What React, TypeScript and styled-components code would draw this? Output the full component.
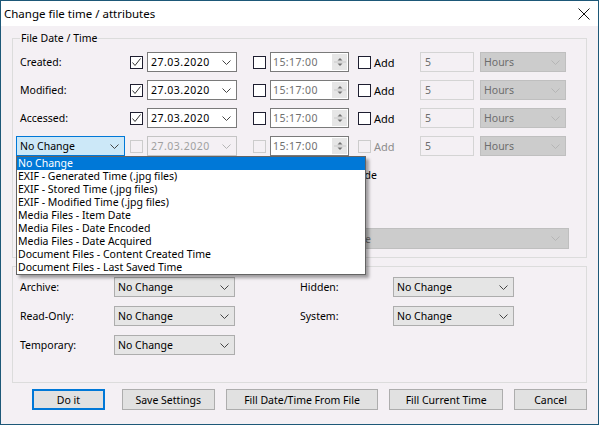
import styled, { createGlobalStyle } from "styled-components";

const GlobalStyle = createGlobalStyle`
  html, body {
    margin: 0;
    padding: 0;
  }
  body {
    font-family: "Noto Sans", "Liberation Sans", sans-serif;
    font-size: 10.5px;
    color: #000;
  }
`;

const sources = [
  "No Change",
  "EXIF - Generated Time (.jpg files)",
  "EXIF - Stored Time (.jpg files)",
  "EXIF - Modified Time (.jpg files)",
  "Media Files - Item Date",
  "Media Files - Date Encoded",
  "Media Files - Date Acquired",
  "Document Files - Content Created Time",
  "Document Files - Last Saved Time",
];

const Chevron = ({ color = "#444" }: { color?: string }) => (
  <svg width="9" height="5" viewBox="0 0 9 5">
    <path d="M0.5 0.5 L4.5 4.5 L8.5 0.5" fill="none" stroke={color} strokeWidth="1" />
  </svg>
);

const Check = () => (
  <svg width="11" height="11" viewBox="0 0 11 11">
    <path d="M1.5 5.5 L4 8.5 L9.5 1.5" fill="none" stroke="#333" strokeWidth="1" />
  </svg>
);

const CheckBox = ({ checked, disabled }: { checked?: boolean; disabled?: boolean }) => (
  <Box $disabled={disabled}>{checked && <Check />}</Box>
);

const Combo = ({
  value,
  width,
  variant,
  spaced,
}: {
  value: string;
  width: number;
  variant: "white" | "gray" | "disabled" | "faded" | "focus";
  spaced?: boolean;
}) => (
  <ComboBox $width={width} $variant={variant}>
    <ComboText $spaced={spaced}>{value}</ComboText>
    <Chevron color={variant === "disabled" || variant === "faded" ? "#b5b5b5" : "#444"} />
  </ComboBox>
);

const TimeField = () => (
  <TimeBox>
    <TimeText>15:17:00</TimeText>
    <Spinner>
      <svg width="14" height="14" viewBox="0 0 14 14">
        <path d="M4.5 5.5 L7 3 L9.5 5.5 Z" fill="#707070" />
        <line x1="1" y1="7" x2="13" y2="7" stroke="#c8c8c8" />
        <path d="M4.5 8.5 L7 11 L9.5 8.5 Z" fill="#707070" />
      </svg>
    </Spinner>
  </TimeBox>
);

const DateRow = ({ label, disabled }: { label: string; disabled?: boolean }) => (
  <>
    <RowLabel>{label}</RowLabel>
    <CheckBox checked disabled={disabled} />
    <Combo value="27.03.2020" width={90} variant={disabled ? "faded" : "white"} spaced />
    <CheckBox disabled={disabled} />
    <TimeField />
    <AddCell $disabled={disabled}>
      <CheckBox disabled={disabled} />
      <span>Add</span>
    </AddCell>
    <NumBox>5</NumBox>
    <Combo value="Hours" width={86} variant="disabled" />
  </>
);

export default function App() {
  return (
    <>
      <GlobalStyle />
      <Window>
        <TitleBar>
          <span>Change file time / attributes</span>
          <svg width="12" height="12" viewBox="0 0 12 12">
            <path d="M0.5 0.5 L11.5 11.5 M11.5 0.5 L0.5 11.5" stroke="#111" strokeWidth="1" />
          </svg>
        </TitleBar>
        <Content>
          <Group>
            <Legend>File Date / Time</Legend>
            <DateGrid>
              <DateRow label="Created:" />
              <DateRow label="Modified:" />
              <DateRow label="Accessed:" />
              <SourceWrap>
                <Combo value="No Change" width={109} variant="focus" />
                <DropList>
                  {sources.map((s, i) => (
                    <DropItem key={s} $active={i === 0}>
                      {s}
                    </DropItem>
                  ))}
                </DropList>
              </SourceWrap>
              <CheckBox disabled />
              <Combo value="27.03.2020" width={90} variant="faded" spaced />
              <CheckBox disabled />
              <TimeField />
              <AddCell $disabled>
                <CheckBox disabled />
                <span>Add</span>
              </AddCell>
              <NumBox>5</NumBox>
              <Combo value="Hours" width={86} variant="disabled" />
            </DateGrid>
            <OptionRow>
              <CheckBox />
              <OptionText>Use Daylight Saving Mode</OptionText>
            </OptionRow>
            <WideSelect>
              <WideText>Local Time Zone</WideText>
              <Chevron color="#b5b5b5" />
            </WideSelect>
          </Group>
          <AttrGroup>
            <AttrLabel>Archive:</AttrLabel>
            <Combo value="No Change" width={121} variant="gray" />
            <AttrLabel $right>Hidden:</AttrLabel>
            <Combo value="No Change" width={121} variant="gray" />
            <AttrLabel>Read-Only:</AttrLabel>
            <Combo value="No Change" width={121} variant="gray" />
            <AttrLabel $right>System:</AttrLabel>
            <Combo value="No Change" width={121} variant="gray" />
            <AttrLabel>Temporary:</AttrLabel>
            <Combo value="No Change" width={121} variant="gray" />
          </AttrGroup>
          <Buttons>
            <Button $width={73} $primary>
              Do it
            </Button>
            <Button $width={93}>Save Settings</Button>
            <Button $width={153}>Fill Date/Time From File</Button>
            <Button $width={114}>Fill Current Time</Button>
            <Button $width={73}>Cancel</Button>
          </Buttons>
        </Content>
      </Window>
    </>
  );
}

const Window = styled.div`
  width: 599px;
  height: 425px;
  box-sizing: border-box;
  border: 1px solid #1d5878;
  background: #f4f0f4;
  display: flex;
  flex-direction: column;
`;

const TitleBar = styled.div`
  height: 25px;
  background: #fff;
  display: flex;
  align-items: center;
  justify-content: space-between;
  padding: 0 8px 0 3px;
  font-size: 11.5px;
`;

const Content = styled.div`
  display: flex;
  flex-direction: column;
  padding: 4px 11px 0 11px;
`;

const Group = styled.fieldset`
  margin: 0;
  padding: 6px 7px 8px 7px;
  border: 1px solid #dcdcdc;
  min-width: 0;
`;

const Legend = styled.legend`
  padding: 0 1px;
  margin-left: 0;
  line-height: 16px;
`;

const DateGrid = styled.div`
  display: grid;
  grid-template-columns: 110px 17px 106px 17px 88px 62px 60px 86px;
  grid-auto-rows: 20px;
  row-gap: 8px;
  align-items: center;
`;

const RowLabel = styled.span`
  line-height: 20px;
`;

const Box = styled.span<{ $disabled?: boolean }>`
  box-sizing: border-box;
  width: 13px;
  height: 13px;
  border: 1px solid ${(p) => (p.$disabled ? "#cccccc" : "#1e1e30")};
  background: ${(p) => (p.$disabled ? "#f4f0f4" : "#fff")};
  display: inline-flex;
  align-items: center;
  justify-content: center;
`;

const variants = {
  white: { bg: "#fff", border: "#7a7a7a", color: "#000" },
  gray: { bg: "#e5e5e5", border: "#adadad", color: "#000" },
  disabled: { bg: "#cccccc", border: "#bfbfbf", color: "#6d6d6d" },
  faded: { bg: "#f4f0f4", border: "#c4c4c4", color: "#a0a0a0" },
  focus: { bg: "#cce8f8", border: "#0078d7", color: "#000" },
};

const ComboBox = styled.div<{ $width: number; $variant: keyof typeof variants }>`
  box-sizing: border-box;
  width: ${(p) => p.$width}px;
  height: 20px;
  border: 1px solid ${(p) => variants[p.$variant].border};
  background: ${(p) => variants[p.$variant].bg};
  color: ${(p) => variants[p.$variant].color};
  display: flex;
  align-items: center;
  justify-content: space-between;
  padding: 0 5px 0 3px;
  white-space: nowrap;
`;

const ComboText = styled.span<{ $spaced?: boolean }>`
  letter-spacing: ${(p) => (p.$spaced ? "0.5px" : "0")};
`;

const TimeBox = styled.div`
  box-sizing: border-box;
  width: 79px;
  height: 20px;
  border: 1px solid #7a7a7a;
  background: #fff;
  color: #707070;
  display: flex;
  align-items: center;
  justify-content: space-between;
  padding: 0 1px 0 2px;
`;

const TimeText = styled.span`
  letter-spacing: 0.4px;
`;

const Spinner = styled.span`
  width: 15px;
  height: 16px;
  background: #e6e6e6;
  display: flex;
  align-items: center;
  justify-content: center;
`;

const AddCell = styled.div<{ $disabled?: boolean }>`
  display: flex;
  align-items: center;
  gap: 3px;
  font-size: 11px;
  color: ${(p) => (p.$disabled ? "#8c8c8c" : "#000")};
`;

const NumBox = styled.div`
  box-sizing: border-box;
  width: 54px;
  height: 20px;
  border: 1px solid #d4d4d4;
  color: #6d6d6d;
  display: flex;
  align-items: center;
  padding-left: 4px;
`;

const SourceWrap = styled.div`
  position: relative;
  margin-left: -4px;
`;

const DropList = styled.div`
  position: absolute;
  top: 20px;
  left: 0;
  z-index: 5;
  width: 350px;
  box-sizing: border-box;
  border: 1px solid #646464;
  background: #fff;
  box-shadow: 3px 3px 3px rgba(0, 0, 0, 0.35);
`;

const DropItem = styled.div<{ $active?: boolean }>`
  height: 13px;
  line-height: 13px;
  padding-left: 1px;
  white-space: nowrap;
  background: ${(p) => (p.$active ? "#0078d7" : "transparent")};
  color: ${(p) => (p.$active ? "#fff" : "#000")};
`;

const OptionRow = styled.div`
  display: flex;
  align-items: center;
  gap: 4px;
  height: 16px;
  margin-top: 11px;
  padding-left: 110px;
`;

const OptionText = styled.span`
  width: 230px;
  text-align: right;
`;

const WideSelect = styled.div`
  box-sizing: border-box;
  height: 21px;
  margin: 45px 0 0 127px;
  width: 422px;
  border: 1px solid #bfbfbf;
  background: #cccccc;
  color: #6d6d6d;
  display: flex;
  align-items: center;
  justify-content: space-between;
  padding: 0 8px 0 3px;
`;

const WideText = styled.span`
  width: 220px;
  text-align: right;
`;

const AttrGroup = styled.div`
  margin-top: 8px;
  border: 1px solid #dcdcdc;
  padding: 10px 7px 27px 7px;
  display: grid;
  grid-template-columns: 94px 121px 65px 93px 121px;
  grid-auto-rows: 20px;
  row-gap: 9px;
  align-items: center;
`;

const AttrLabel = styled.span<{ $right?: boolean }>`
  grid-column: ${(p) => (p.$right ? 4 : 1)};
`;

const Buttons = styled.div`
  display: flex;
  gap: 11px;
  margin-top: 6px;
  padding-left: 20px;
`;

const Button = styled.button<{ $width: number; $primary?: boolean }>`
  box-sizing: border-box;
  width: ${(p) => p.$width}px;
  height: 21px;
  margin-right: ${(p) => (p.$primary ? 6 : 0)}px;
  padding: 0;
  font: inherit;
  color: #000;
  background: #e1e1e1;
  border: ${(p) => (p.$primary ? "2px solid #0078d7" : "1px solid #adadad")};
`;
